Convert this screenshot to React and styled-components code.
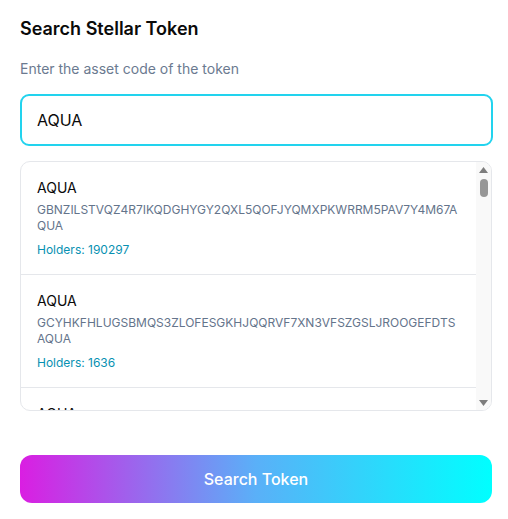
import React from "react";
import styled, { createGlobalStyle } from "styled-components";

const Global = createGlobalStyle`
  html, body { margin: 0; padding: 0; background: #ffffff; }
  body { font-family: Inter, "Noto Sans", sans-serif; }
  * { box-sizing: border-box; }
`;

const Page = styled.div`
  padding: 17px 16px 16px 20px;
  display: flex;
  flex-direction: column;
`;

const Title = styled.h2`
  margin: 0;
  font-size: 18px;
  line-height: 24px;
  font-weight: 600;
  color: #0a0a0a;
`;

const Subtitle = styled.p`
  margin: 18px 0 0;
  font-size: 14px;
  line-height: 20px;
  color: #6b7a90;
`;

const Input = styled.input`
  margin-top: 15px;
  width: 473px;
  height: 52px;
  border: 2px solid #22d3ee;
  border-radius: 9px;
  padding: 0 15px;
  font-family: Inter, sans-serif;
  font-size: 16px;
  color: #0a0a0a;
  outline: none;
  caret-color: #000;
`;

const List = styled.div`
  margin-top: 15px;
  width: 472px;
  height: 250px;
  border: 1px solid #e5e7eb;
  border-radius: 10px;
  overflow: hidden;
  display: flex;
`;

const Scroller = styled.div`
  flex: 1;
  min-width: 0;
  overflow-y: auto;
  scrollbar-width: none;
  &::-webkit-scrollbar { display: none; }
`;

const ScrollBar = styled.div`
  width: 15px;
  flex: none;
  background: #f9f9f9;
  display: flex;
  flex-direction: column;
  align-items: center;
`;

const Arrow = styled.div`
  width: 15px;
  height: 15px;
  display: flex;
  align-items: center;
  justify-content: center;
`;

const Thumb = styled.div`
  width: 8px;
  height: 18px;
  border-radius: 4px;
  background: #979797;
  margin-top: 2px;
`;

const Spacer = styled.div`
  flex: 1;
`;

const Item = styled.div`
  padding: 16px 16px 16px;
  border-bottom: 1px solid #e5e7eb;
  cursor: pointer;
`;

const Code = styled.div`
  font-size: 14px;
  line-height: 20px;
  font-weight: 400;
  color: #0a0a0a;
`;

const Issuer = styled.div`
  margin-top: 4px;
  font-size: 12px;
  line-height: 16px;
  color: #64748b;
  word-break: break-all;
`;

const Holders = styled.div`
  margin-top: 8px;
  font-size: 12px;
  line-height: 16px;
  color: #0891b2;
`;

const Button = styled.button`
  margin-top: 44px;
  width: 472px;
  height: 48px;
  border: none;
  border-radius: 12px;
  background: linear-gradient(to right, #da1ee2, #5ab0f8 50%, #00ffff);
  color: #ffffff;
  font-family: Inter, sans-serif;
  font-size: 16px;
  font-weight: 500;
  cursor: pointer;
`;

const tokens = [
  ["GBNZILSTVQZ4R7IKQDGHYGY2QXL5QOFJYQMXPKWRRM5PAV7Y4M67AQUA", "190297"],
  ["GCYHKFHLUGSBMQS3ZLOFESGKHJQQRVF7XN3VFSZGSLJROOGEFDTSAQUA", "1636"],
  ["GAHPYWLK6YRN7CVYZOO4H3VDRZ7PVF5UJGLZCSPAEIKJE2XSWF5LAQUA", "842"],
  ["GDNKTAGLHYSWFRM3BZXDJ6LTXNUL42ZNKEB4WJ4VKSMHSH6FSRD2AQUA", "517"],
  ["GBMRAG3FDY4U5N5BJ3LP4KSDVIUAMQ5FMFXHYQP2N7EZQ4PNPZRAAQUA", "311"],
  ["GARBHFRPHV3WGYDLYRXTIHO2TKB4KOZYPQ6SQYF6FEZPROC6JJ3QAQUA", "204"],
  ["GCNQYZ3ZRAPQWXBJ6GGZ2HGLRH4YNO3RWYDY6SHJZ3N2G5PQBWK3AQUA", "158"],
  ["GDRPRLB7ZI3QG2NH4LO6L4T5ZWOT3YGRD3UFGF4TS6S2YC2JQPYMAQUA", "97"],
  ["GAZ3NPJGSXG6QFGBQDEDHHGYQDOJ3VDNPP5MW2QYWT2ZHQBBZYNCAQUA", "61"],
  ["GBH7XTJ4JJFGK5BXL5SCOM4PLPZCTG4KQAPBDL2KZSLVBEOPZPOQAQUA", "43"],
  ["GCO5WW5YJXVKMYE2QJ4LFDCCJPHPSOHNGXN3D5JXXTTPQSIAM7ARAQUA", "28"],
  ["GDXAN2BYMBGRCYK5G4HGZOVZ3K3ECHU2YR6VYJ7YU3HEBD6FBOOSAQUA", "19"],
  ["GBDZVRZ2RY3ZS3QYG3N2U7MKUNUPWLD6QXOJPT3SBM2H4SGYCLK4AQUA", "12"],
  ["GAFSLYTHKDCUA2ROAJXGOKMPGTFO4WDO4OGPGGMAEYYTPCZGVE5HAQUA", "8"],
];

function UpIcon() {
  return (
    <svg width="9" height="6" viewBox="0 0 9 6">
      <polygon points="4.5,0 9,6 0,6" fill="#7d7d7d" />
    </svg>
  );
}

function DownIcon() {
  return (
    <svg width="9" height="6" viewBox="0 0 9 6">
      <polygon points="0,0 9,0 4.5,6" fill="#7d7d7d" />
    </svg>
  );
}

export default function App() {
  return (
    <>
      <Global />
      <Page>
        <Title>Search Stellar Token</Title>
        <Subtitle>Enter the asset code of the token</Subtitle>
        <Input defaultValue="AQUA" autoFocus />
        <List>
          <Scroller>
            {tokens.map(([issuer, holders], i) => (
              <Item key={i}>
                <Code>AQUA</Code>
                <Issuer>{issuer}</Issuer>
                <Holders>Holders: {holders}</Holders>
              </Item>
            ))}
          </Scroller>
          <ScrollBar>
            <Arrow><UpIcon /></Arrow>
            <Thumb />
            <Spacer />
            <Arrow><DownIcon /></Arrow>
          </ScrollBar>
        </List>
        <Button>Search Token</Button>
      </Page>
    </>
  );
}
